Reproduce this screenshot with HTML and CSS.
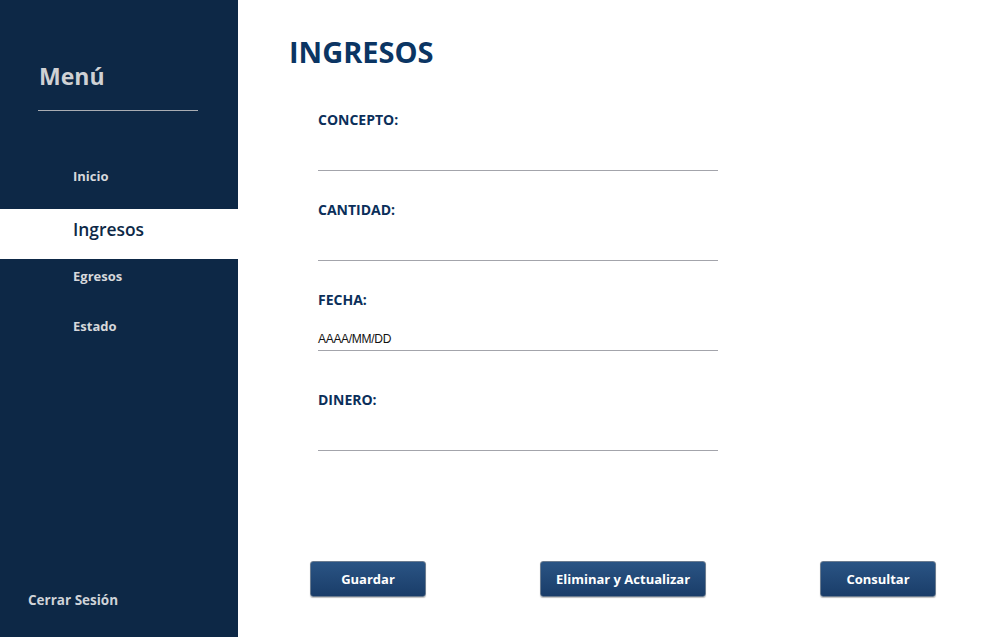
FILE: index.html
```html
<!DOCTYPE html>
<html lang="es">
<head>
<meta charset="utf-8">
<title>Ingresos</title>
<link rel="stylesheet" href="styles.css">
</head>
<body>
<div class="app">
  <aside class="sidebar">
    <h2 class="menu-title">Menú</h2>
    <div class="menu-rule"></div>
    <nav class="nav">
      <a class="nav-item">Inicio</a>
      <a class="nav-item active">Ingresos</a>
      <a class="nav-item">Egresos</a>
      <a class="nav-item">Estado</a>
    </nav>
    <a class="logout">Cerrar Sesión</a>
  </aside>
  <main class="main">
    <h1 class="page-title">INGRESOS</h1>
    <form class="form">
      <div class="field">
        <label class="field-label">CONCEPTO:</label>
        <div class="field-input"></div>
      </div>
      <div class="field">
        <label class="field-label">CANTIDAD:</label>
        <div class="field-input"></div>
      </div>
      <div class="field">
        <label class="field-label">FECHA:</label>
        <div class="field-input"><span class="placeholder">AAAA/MM/DD</span></div>
      </div>
      <div class="field field-last">
        <label class="field-label">DINERO:</label>
        <div class="field-input"></div>
      </div>
    </form>
    <div class="actions">
      <button class="btn btn-guardar" type="button">Guardar</button>
      <button class="btn btn-eliminar" type="button">Eliminar y Actualizar</button>
      <button class="btn btn-consultar" type="button">Consultar</button>
    </div>
  </main>
</div>
</body>
</html>
```
FILE: styles.css
```css
* { box-sizing: border-box; }
html, body { margin: 0; padding: 0; }
body {
  font-family: "Open Sans", "Noto Sans", "Liberation Sans", sans-serif;
  background: #ffffff;
}
.app {
  display: flex;
  width: 1006px;
  height: 637px;
}
.sidebar {
  width: 238px;
  flex: 0 0 238px;
  background: #0d2846;
  display: flex;
  flex-direction: column;
  padding-top: 60px;
}
.menu-title {
  margin: 0 0 0 39px;
  font-size: 23px;
  font-weight: 700;
  color: #cfd1d4;
  line-height: 32px;
  flex-shrink: 0;
}
.menu-rule {
  margin: 18px 0 0 38px;
  width: 160px;
  height: 1px;
  background: #a9adb3;
  flex-shrink: 0;
}
.nav {
  display: flex;
  flex-direction: column;
  margin-top: 48px;
  flex-shrink: 0;
}
.nav-item {
  display: flex;
  align-items: flex-start;
  height: 50px;
  padding-top: 8px;
  padding-left: 73px;
  font-size: 13px;
  line-height: 18px;
  font-weight: 700;
  color: #d6d8db;
  flex-shrink: 0;
}
.nav-item.active {
  background: #ffffff;
  color: #0d2846;
  font-size: 17.4px;
  line-height: 24px;
  font-weight: 600;
}
.logout {
  margin-top: auto;
  margin-bottom: 28px;
  padding-left: 28px;
  font-size: 13.5px;
  font-weight: 700;
  color: #cfd3d8;
}
.main {
  flex: 1;
  padding: 32px 0 0 51px;
  display: flex;
  flex-direction: column;
}
.page-title {
  margin: 0;
  font-size: 29px;
  font-weight: 700;
  color: #0b3563;
  line-height: 40px;
  flex-shrink: 0;
}
.form {
  display: flex;
  flex-direction: column;
  margin-left: 29px;
  margin-top: 38px;
  flex-shrink: 0;
}
.field {
  display: flex;
  flex-direction: column;
  width: 400px;
  height: 90px;
  flex-shrink: 0;
}
.field-last {
  margin-top: 10px;
}
.field-label {
  font-size: 14px;
  font-weight: 700;
  color: #0b2f5a;
  line-height: 20px;
}
.field-input {
  height: 31px;
  margin-top: 10px;
  border-bottom: 1px solid #a3a4ab;
  display: flex;
  align-items: flex-end;
  padding-bottom: 4px;
}
.placeholder {
  font-family: "Liberation Sans", Arial, sans-serif;
  font-size: 12px;
  color: #111111;
  letter-spacing: -0.3px;
}
.actions {
  display: flex;
  margin-top: 81px;
  margin-left: 21px;
  flex-shrink: 0;
}
.btn {
  height: 36px;
  border: 1px solid #6b7c90;
  border-radius: 3px;
  background: linear-gradient(#2a5484, #1a3d69);
  color: #ffffff;
  font-family: inherit;
  font-size: 13px;
  font-weight: 700;
  box-shadow: 0 1px 1px rgba(0,0,0,0.25);
}
.btn-guardar { width: 116px; }
.btn-eliminar { width: 166px; margin-left: 114px; }
.btn-consultar { width: 116px; margin-left: 114px; }
```
